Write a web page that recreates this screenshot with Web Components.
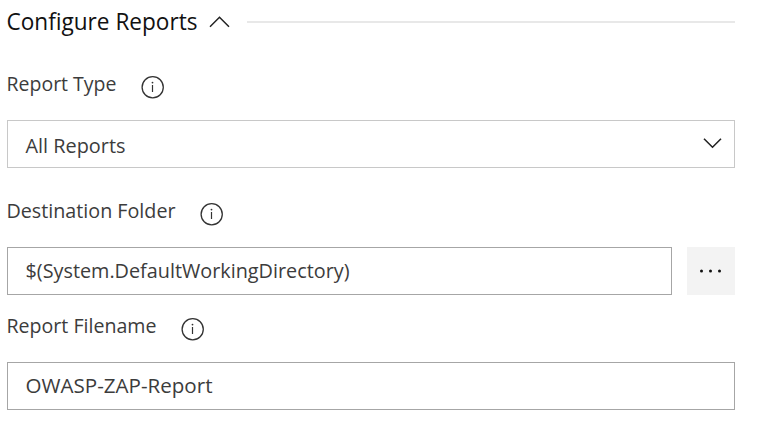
<!DOCTYPE html>
<html lang="en"><head><meta charset="utf-8"><title>Configure Reports</title>
<style>html{background:#fff}body{margin:0;font-family:"Open Sans","Noto Sans",sans-serif;color:#3c3c3c;overflow:hidden}</style></head>
<body><report-settings></report-settings>
<script>
class FitText extends HTMLElement{
  connectedCallback(){
    const r=this.attachShadow({mode:'open'});
    r.innerHTML=`<style>:host{display:block;flex:none;height:28px}svg{display:block;overflow:visible}text{font-family:"Open Sans","Noto Sans",sans-serif;fill:currentColor}</style>
    <svg width="${this.getAttribute('w')}" height="28"><text x="-.5" y="21" font-size="${this.getAttribute('size')||20.6}" textLength="${this.getAttribute('w')}" lengthAdjust="spacingAndGlyphs">${this.textContent}</text></svg>`;
  }
}
customElements.define('fit-text',FitText);
class InfoIcon extends HTMLElement{
  connectedCallback(){
    this.attachShadow({mode:'open'}).innerHTML=`<style>:host{display:block;width:24px;height:24px}svg{display:block}</style>
    <svg width="24" height="24" fill="none" stroke="#333" stroke-width="1.3"><circle cx="11.7" cy="12.2" r="10.6"/><path d="M11.5 10v7" stroke-width="1.2"/><circle cx="11.5" cy="7.6" r=".9" fill="#333" stroke="none"/></svg>`;
  }
}
customElements.define('info-icon',InfoIcon);
class SectionHeader extends HTMLElement{
  connectedCallback(){
    this.attachShadow({mode:'open'}).innerHTML=`<style>:host{display:flex;height:44px;align-items:center;color:#111}::slotted(fit-text){margin-top:2px}svg{margin-left:11px;flex:none}i{height:2px;background:#e8e8e8;flex:1;margin-left:17px}</style>
    <slot></slot><svg width="21" height="14" fill="none" stroke="#222" stroke-width="1.5"><path d="M1 11.8 10.5 2.3 20 11.8"/></svg><i></i>`;
  }
}
customElements.define('section-header',SectionHeader);
class FormField extends HTMLElement{
  connectedCallback(){
    this.attachShadow({mode:'open'}).innerHTML=`<style>:host{display:block}.label{display:flex;height:28px}info-icon{margin:5px 0 0 24px}.control{display:flex;gap:15px;margin-top:22px}</style>
    <div class="label"><slot name="label"></slot><info-icon></info-icon></div><div class="control"><slot></slot></div>`;
  }
}
customElements.define('form-field',FormField);
class ValueBox extends HTMLElement{
  connectedCallback(){
    const select=this.hasAttribute('select');
    this.attachShadow({mode:'open'}).innerHTML=`<style>:host{display:flex;box-sizing:border-box;height:48px;flex:1;border:1px solid ${select?'#c8c8c8':'#a6a6a6'};padding:${select?11:9}px 12px 0 18px;justify-content:space-between}svg{margin-top:5px}</style>
    <slot></slot>${select?'<svg width="19" height="12" fill="none" stroke="#222" stroke-width="1.6"><path d="m1 1.8 8.5 8.4L18 1.8"/></svg>':''}`;
  }
}
customElements.define('value-box',ValueBox);
class BrowseButton extends HTMLElement{
  connectedCallback(){
    this.attachShadow({mode:'open'}).innerHTML=`<style>:host{display:grid;place-items:center;width:48px;height:48px;background:#f3f3f3}svg{display:block}</style><svg width="24" height="4" fill="#111"><circle cx="2.5" cy="1.9" r="1.5"/><circle cx="11.5" cy="1.9" r="1.5"/><circle cx="20.5" cy="1.9" r="1.5"/></svg>`;
  }
}
customElements.define('browse-button',BrowseButton);
class ReportSettings extends HTMLElement{
  connectedCallback(){
    this.attachShadow({mode:'open'}).innerHTML=`<style>:host{display:block;padding:0 23px 0 7px}.type{margin-top:26px}.dest{margin-top:29px}.name{margin-top:17px}</style>
    <section-header><fit-text w="191" size="23">Configure Reports</fit-text></section-header>
    <form-field class="type"><fit-text slot="label" w="110">Report Type</fit-text><value-box select><fit-text w="100">All Reports</fit-text></value-box></form-field>
    <form-field class="dest"><fit-text slot="label" w="169">Destination Folder</fit-text><value-box><fit-text w="324">$(System.DefaultWorkingDirectory)</fit-text></value-box><browse-button></browse-button></form-field>
    <form-field class="name"><fit-text slot="label" w="150">Report Filename</fit-text><value-box><fit-text w="187">OWASP-ZAP-Report</fit-text></value-box></form-field>`;
  }
}
customElements.define('report-settings',ReportSettings);
</script></body></html>
